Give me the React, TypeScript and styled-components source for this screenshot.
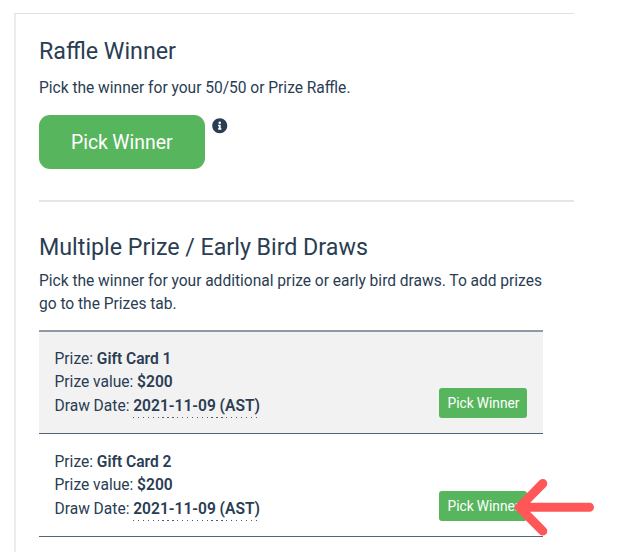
import React from "react";
import styled, { createGlobalStyle } from "styled-components";

const GlobalStyle = createGlobalStyle`
  * { box-sizing: border-box; }
  body { margin: 0; background: #fff; }
`;

const Page = styled.main`
  position: relative;
  width: 626px;
  height: 558px;
  padding: 13px 0 0 14px;
  overflow: hidden;
  background: #fff;
  color: #2a3d53;
  font: 400 15.58px/23.5px Roboto, sans-serif;
  word-spacing: -0.12px;
`;

const Panel = styled.section`
  width: 560px;
  height: 539px;
  padding-left: 23px;
  border-top: 1px solid #e0e0e0;
  border-left: 2px solid #ececec;
`;

const Title = styled.h2`
  margin: 0;
  font-size: 23.25px;
  font-weight: 400;
  line-height: 28px;
  white-space: nowrap;
`;

const RaffleSection = styled.div`
  height: 188px;
  padding-top: 23px;
  border-bottom: 2px solid #e5e5e5;
`;

const DrawsSection = styled.div`
  padding-top: 31px;
`;

const Copy = styled.p<{ $top: number }>`
  margin: ${(p) => p.$top}px 0 0;
  white-space: nowrap;
`;

const Actions = styled.div`
  display: flex;
  align-items: flex-start;
  gap: 7.5px;
  margin-top: 14px;
`;

const PickButton = styled.button<{ $large?: boolean }>`
  display: block;
  flex: none;
  width: ${(p) => (p.$large ? 165.5 : 88)}px;
  height: ${(p) => (p.$large ? 54 : 30)}px;
  padding: ${(p) => (p.$large ? "1px 0 0" : "0 0 0 1px")};
  border: 0;
  border-radius: ${(p) => (p.$large ? 11 : 3)}px;
  background: #57b55d;
  color: #fff;
  font: 400 ${(p) => (p.$large ? 19.4 : 13.75)}px Roboto, sans-serif;
  word-spacing: -0.4px;
  white-space: nowrap;
`;

const InfoIcon = styled.svg`
  display: block;
  width: 15.5px;
  height: 15.5px;
  margin-top: 3.5px;
`;

const PrizeTable = styled.div`
  width: 504px;
  margin-top: 13px;
  border-top: 2px solid #8f9aa6;
`;

const PrizeRow = styled.div<{ $shaded?: boolean }>`
  display: flex;
  justify-content: space-between;
  align-items: flex-end;
  height: ${(p) => (p.$shaded ? 102 : 103)}px;
  padding: 0 16px 15px 15.5px;
  border-bottom: 1px solid #566575;
  background: ${(p) => (p.$shaded ? "#f2f2f2" : "#fff")};
`;

const Details = styled.div`
  margin-bottom: -0.5px;
  white-space: nowrap;
`;

const Strong = styled.strong`
  font-weight: 600;
`;

const DrawDate = styled(Strong)`
  display: inline-block;
  height: 23px;
  background: repeating-linear-gradient(90deg, #4d5b6b 0 1.3px, transparent 1.3px 4.9px) left bottom / 100% 1px no-repeat;
`;

const Arrow = styled.svg`
  position: absolute;
  left: 510px;
  top: 474px;
  width: 88px;
  height: 66px;
`;

const prizes = [
  { name: "Gift Card 1", value: "$200", date: "2021-11-09 (AST)" },
  { name: "Gift Card 2", value: "$200", date: "2021-11-09 (AST)" },
];

export default function App() {
  return (
    <>
      <GlobalStyle />
      <Page>
        <Panel>
          <RaffleSection>
            <Title>Raffle Winner</Title>
            <Copy $top={12}>Pick the winner for your 50/50 or Prize Raffle.</Copy>
            <Actions>
              <PickButton $large>Pick Winner</PickButton>
              <InfoIcon viewBox="0 0 512 512" aria-label="Information">
                <path
                  fill="#2a3d53"
                  d="M256 8C119 8 8 119 8 256s111 248 248 248 248-111 248-248S393 8 256 8zm0 110a42 42 0 1 1 0 84 42 42 0 1 1 0-84zm56 254c0 7-5 12-12 12h-88c-7 0-12-5-12-12v-24c0-7 5-12 12-12h12v-64h-12c-7 0-12-5-12-12v-24c0-7 5-12 12-12h64c7 0 12 5 12 12v100h12c7 0 12 5 12 12z"
                />
              </InfoIcon>
            </Actions>
          </RaffleSection>
          <DrawsSection>
            <Title>Multiple Prize / Early Bird Draws</Title>
            <Copy $top={8.5}>
              Pick the winner for your additional prize or early bird draws. To add prizes
              <br />
              go to the Prizes tab.
            </Copy>
            <PrizeTable>
              {prizes.map((prize, i) => (
                <PrizeRow key={prize.name} $shaded={i % 2 === 0}>
                  <Details>
                    Prize: <Strong>{prize.name}</Strong>
                    <br />
                    Prize value: <Strong>{prize.value}</Strong>
                    <br />
                    Draw Date: <DrawDate>{prize.date}</DrawDate>
                  </Details>
                  <PickButton>Pick Winner</PickButton>
                </PrizeRow>
              ))}
            </PrizeTable>
          </DrawsSection>
        </Panel>
        <Arrow viewBox="0 0 88 66" aria-hidden="true">
          <path
            d="M79.500 33.300H10M32.800 9.500L9.300 33.300L32.800 57.100"
            fill="none"
            stroke="#ff5757"
            strokeWidth="9"
            strokeLinecap="round"
            strokeLinejoin="round"
          />
        </Arrow>
      </Page>
    </>
  );
}
